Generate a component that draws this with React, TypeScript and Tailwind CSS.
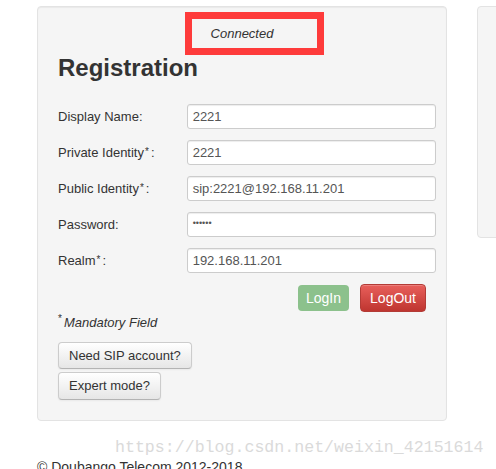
import React from "react";

const fields = [
  { label: "Display Name", value: "2221", required: false },
  { label: "Private Identity", value: "2221", required: true },
  { label: "Public Identity", value: "sip:2221@192.168.11.201", required: true },
  { label: "Password", value: "••••••", required: false, password: true },
  { label: "Realm", value: "192.168.11.201", required: true },
];

function FieldRow({ label, value, required, password }: any) {
  return (
    <div className="flex items-center h-[25px]">
      <label className="w-[129px] text-[13px] text-[#333]">
        {label}
        {required && <sup className="text-[10px] relative top-[-2px] ml-[1px] mr-[2px]">*</sup>}:
      </label>
      <div className="w-[250px] h-[25px] bg-white border border-[#cccccc] rounded-[3px] shadow-[inset_0_1px_1px_rgba(0,0,0,0.075)] flex items-center px-[5px] text-[13px] text-[#555]">
        {password ? <span className="text-[9px] relative top-[-1px]">{value}</span> : value}
      </div>
    </div>
  );
}

export default function App() {
  return (
    <div
      className="w-[496px] h-[469px] overflow-hidden bg-white relative"
      style={{ fontFamily: '"Liberation Sans", Arial, sans-serif' }}
    >
      <div className="flex gap-[30px] pl-[37px] pt-[6px] items-start">
        {/* left panel */}
        <div className="relative shrink-0 w-[410px] h-[415px] bg-[#f5f5f5] border border-[#e3e3e3] rounded-[4px] shadow-[inset_0_1px_1px_rgba(0,0,0,0.05)] pl-[20px] pr-[10px] pt-[18px]">
          <div className="text-center italic text-[13px] text-[#333] leading-[18px] pr-[10px]">
            Connected
          </div>
          {/* annotation box */}
          <div className="absolute left-[147px] top-[5px] w-[139px] h-[43px] border-[7px] border-[#fe3b3b]" />

          <h2 className="text-[24px] font-bold text-[#333] leading-[30px] mt-[10px]">Registration</h2>

          <div className="flex flex-col gap-[11px] mt-[21px]">
            {fields.map((f) => (
              <FieldRow key={f.label} {...f} />
            ))}
          </div>

          <div className="flex justify-end gap-[11px] mt-[11px] pr-[10px] items-center">
            <button className="h-[26px] px-[8px] rounded-[4px] bg-[#8cc18c] text-white text-[14px]">
              LogIn
            </button>
            <button className="h-[28px] px-[9px] rounded-[4px] border border-[#b33b36] bg-gradient-to-b from-[#e85f5b] to-[#bf3530] text-white text-[14px] shadow-[inset_0_1px_0_rgba(255,255,255,0.2)]">
              LogOut
            </button>
          </div>

          <div className="mt-[2px] text-[13px] text-[#333] leading-[18px]">
            <sup className="text-[10px] not-italic">*</sup>
            <span className="italic ml-[2px]">Mandatory Field</span>
          </div>

          <div className="flex flex-col items-start gap-[3px] mt-[10px]">
            <button className="h-[27px] px-[10px] rounded-[4px] border border-[#cccccc] border-b-[#b3b3b3] bg-gradient-to-b from-white to-[#e6e6e6] text-[13px] text-[#333] shadow-[0_1px_2px_rgba(0,0,0,0.05)]">
              Need SIP account?
            </button>
            <button className="h-[28px] px-[10px] rounded-[4px] border border-[#cccccc] border-b-[#b3b3b3] bg-gradient-to-b from-white to-[#e6e6e6] text-[13px] text-[#333] shadow-[0_1px_2px_rgba(0,0,0,0.05)]">
              Expert mode?
            </button>
          </div>
        </div>

        {/* right panel */}
        <div className="shrink-0 w-[300px] h-[232px] bg-[#f5f5f5] border border-[#e3e3e3] rounded-[4px]" />
      </div>

      <div className="pl-[37px] mt-[36px] text-[14px] text-[#333] leading-[20px]">
        © Doubango Telecom 2012-2018
      </div>

      <div
        className="absolute left-[115px] top-[437px] text-[16.6px] text-[#dadada] leading-[22px] whitespace-nowrap"
        style={{ fontFamily: '"Liberation Mono", monospace' }}
      >
        https://blog.csdn.net/weixin_42151614
      </div>
    </div>
  );
}
